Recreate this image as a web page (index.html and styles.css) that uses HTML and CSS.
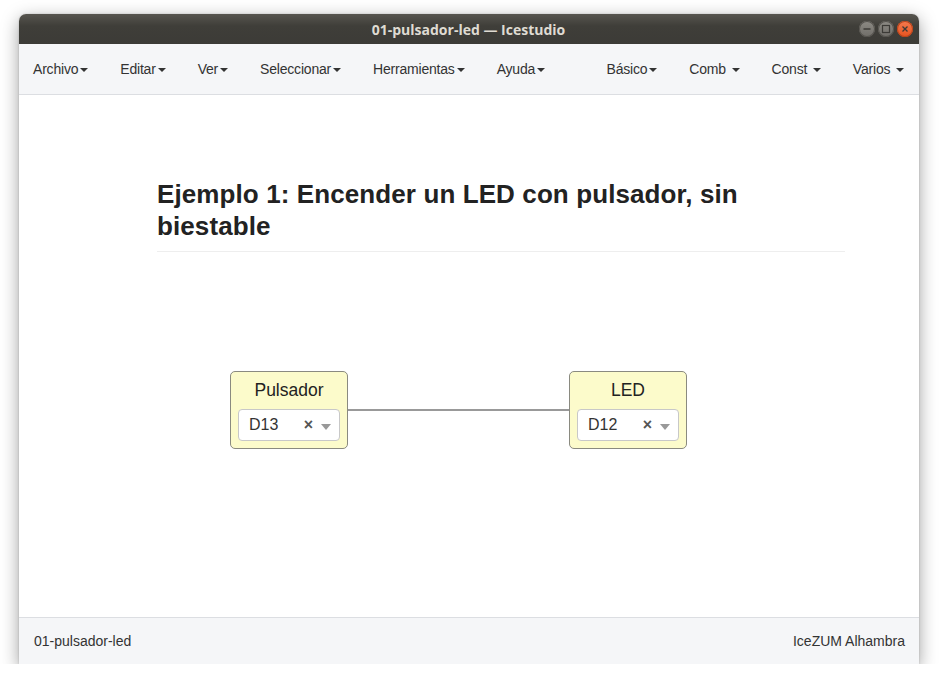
FILE: index.html
```html
<!DOCTYPE html>
<html lang="es">
<head>
<meta charset="utf-8">
<title>01-pulsador-led — Icestudio</title>
<link rel="stylesheet" href="styles.css">
</head>
<body>
<div class="window">
  <div class="titlebar">
    <span class="title">01-pulsador-led — Icestudio</span>
    <div class="wbtns">
      <span class="wbtn gray"><svg width="16" height="16" viewBox="0 0 16 16"><line x1="4.5" y1="8" x2="11.5" y2="8" stroke="#3c3b37" stroke-width="1.3"/></svg></span>
      <span class="wbtn gray"><svg width="16" height="16" viewBox="0 0 16 16"><rect x="4.5" y="4.5" width="7" height="7" fill="none" stroke="#3c3b37" stroke-width="1.2"/></svg></span>
      <span class="wbtn close"><svg width="16" height="16" viewBox="0 0 16 16"><path d="M5.5 5.5 L10.5 10.5 M10.5 5.5 L5.5 10.5" stroke="#3c3b37" stroke-width="1.3"/></svg></span>
    </div>
  </div>
  <nav class="menubar">
    <ul class="menu left">
      <li>Archivo<span class="caret"></span></li>
      <li>Editar<span class="caret"></span></li>
      <li>Ver<span class="caret"></span></li>
      <li>Seleccionar<span class="caret"></span></li>
      <li>Herramientas<span class="caret"></span></li>
      <li>Ayuda<span class="caret"></span></li>
    </ul>
    <ul class="menu right">
      <li>Básico<span class="caret"></span></li>
      <li>Comb <span class="caret"></span></li>
      <li>Const <span class="caret"></span></li>
      <li>Varios <span class="caret"></span></li>
    </ul>
  </nav>
  <main class="canvas">
    <h1 class="heading">Ejemplo 1: Encender un LED con pulsador, sin biestable</h1>
    <svg class="wire" width="900" height="522"><line x1="329" y1="315" x2="550" y2="315" stroke="#777" stroke-width="1.6"/></svg>
    <div class="block b1">
      <div class="label">Pulsador</div>
      <div class="select"><span class="val">D13</span><span class="clear">×</span><span class="arrow"></span></div>
    </div>
    <div class="block b2">
      <div class="label">LED</div>
      <div class="select"><span class="val">D12</span><span class="clear">×</span><span class="arrow"></span></div>
    </div>
  </main>
  <footer class="footer">
    <span>01-pulsador-led</span>
    <span>IceZUM Alhambra</span>
  </footer>
</div>
</body>
</html>
```
FILE: styles.css
```css
html, body {
  margin: 0;
  padding: 0;
  background: #ffffff;
}
body {
  font-family: "Liberation Sans", Arial, sans-serif;
  color: #333;
}
.window {
  margin: 14px 0 0 19px;
  width: 900px;
  height: 650px;
  display: flex;
  flex-direction: column;
  border-radius: 7px 7px 0 0;
  box-shadow: 0 5px 18px rgba(0,0,0,0.38), 0 0 2px rgba(0,0,0,0.2);
  overflow: hidden;
  background: #fff;
}
.titlebar {
  height: 30px;
  flex: none;
  background: linear-gradient(#57554f, #3f3e39 40%, #3c3b37);
  display: flex;
  align-items: center;
  justify-content: center;
  position: relative;
}
.title {
  font-family: "Open Sans", "DejaVu Sans", sans-serif;
  font-weight: 700;
  font-size: 14px;
  color: #dfdbd2;
  letter-spacing: 0px;
  margin-left: -1px;
}
.wbtns {
  position: absolute;
  right: 6px;
  top: 7px;
  display: flex;
  gap: 3px;
}
.wbtn {
  width: 16px;
  height: 16px;
  border-radius: 50%;
  display: block;
  box-sizing: border-box;
}
.wbtn svg { display: block; }
.wbtn.gray {
  background: linear-gradient(#8d8b85, #6f6d68);
  box-shadow: inset 0 0 0 1px #55534e;
}
.wbtn.close {
  background: linear-gradient(#f47a4f, #e4521f);
  box-shadow: inset 0 0 0 1px #b8441c;
}
.menubar {
  height: 50px;
  flex: none;
  background: #f5f6f8;
  border-bottom: 1px solid #dcdee2;
  display: flex;
  justify-content: space-between;
  align-items: center;
}
.menu {
  list-style: none;
  margin: 0;
  padding: 0;
  display: flex;
  font-size: 14px;
  color: #333;
}
.menu.left { margin-left: -2px; }
.menu.right { margin-right: -1px; }
.menu li {
  padding: 0 16px;
  white-space: pre;
  letter-spacing: -0.2px;
}
.caret {
  display: inline-block;
  width: 0;
  height: 0;
  margin-left: 2px;
  vertical-align: middle;
  border-top: 4px solid #333;
  border-left: 4px solid transparent;
  border-right: 4px solid transparent;
}
.canvas {
  flex: 1;
  position: relative;
  background: #fff;
}
.heading {
  margin: 83px 0 0 138px;
  width: 688px;
  font-size: 26px;
  line-height: 32px;
  font-weight: 700;
  color: #222;
  padding-bottom: 9px;
  border-bottom: 1px solid #eeeeee;
  letter-spacing: 0.1px;
}
.wire {
  position: absolute;
  left: 0;
  top: 0;
}
.block {
  position: absolute;
  top: 276px;
  width: 118px;
  height: 78px;
  box-sizing: border-box;
  background: #fcfbcb;
  border: 1px solid #8a8a80;
  border-radius: 5px;
  display: flex;
  flex-direction: column;
  align-items: center;
}
.b1 { left: 211px; }
.b2 { left: 550px; }
.label {
  font-size: 17.5px;
  line-height: 20px;
  margin-top: 8px;
  color: #222;
}
.select {
  margin-top: 9px;
  width: 102px;
  height: 32px;
  box-sizing: border-box;
  background: #fff;
  border: 1px solid #c8c8c8;
  border-radius: 4px;
  display: flex;
  align-items: center;
  padding-left: 10px;
}
.val {
  font-size: 16px;
  color: #333;
  flex: 1;
}
.clear {
  font-size: 16px;
  font-weight: 700;
  color: #555;
  margin-right: 8px;
  line-height: 1;
}
.arrow {
  width: 0;
  height: 0;
  border-top: 6px solid #999;
  border-left: 5px solid transparent;
  border-right: 5px solid transparent;
  margin-right: 8px;
  margin-top: 3px;
}
.footer {
  height: 46px;
  flex: none;
  background: #f5f6f8;
  border-top: 1px solid #dcdee2;
  display: flex;
  justify-content: space-between;
  align-items: center;
  padding: 0 14px 0 15px;
  font-size: 14px;
  color: #333;
  letter-spacing: 0;
}
```
